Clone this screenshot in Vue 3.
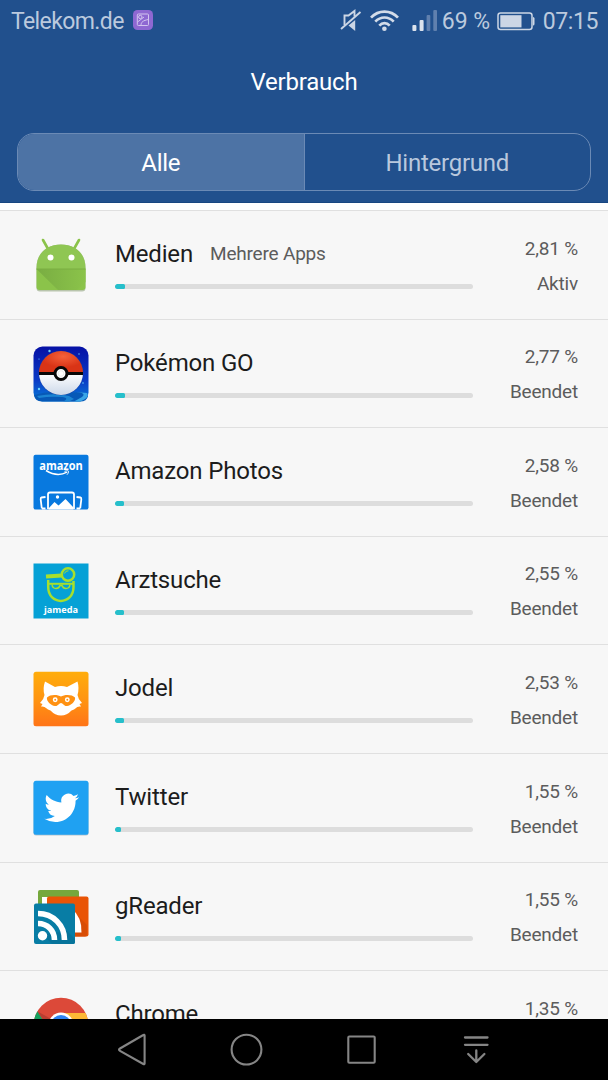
<template>
    <div class="screen">
        <header class="header">
            <div class="status-bar">
                <span class="carrier">Telekom.de</span>
                <svg class="notification" width="20" height="20" viewBox="0 0 20 20">
                    <rect width="20" height="20" rx="4.5" fill="#8e68d2" />
                    <g fill="none" stroke="#d2c4ef" stroke-width="1">
                        <rect x="4.3" y="4" width="11.2" height="11.5" rx="1" />
                        <circle cx="7.3" cy="7" r="1.7" />
                        <path d="M8 15.5C8 12 10 10.500 15.500 9.500M4.500 12L11 7" />
                    </g>
                </svg>
                <svg class="status-icons" width="102" height="24" viewBox="336 8 102 24">
                    <g fill="none" stroke="#ccd6e5" stroke-width="1.900">
                        <path d="M340 29L359.500 12" />
                        <path d="M343.500 25V15.500H347.500L353.500 11V16.500" />
                    </g>
                    <path d="M347.500 25.500L354.200 20V31Z" fill="#ccd6e5" />
                    <g fill="none" stroke="#d3dce9" stroke-width="2.700">
                        <path d="M370 17.700C377.500 9.700 389.500 9.700 397 17.700" />
                        <path d="M374.300 21.700C379.500 16.100 387.500 16.100 392.700 21.700" />
                        <path d="M378.300 25.600C381.300 22.300 385.700 22.300 388.700 25.600" />
                    </g>
                    <circle cx="383.400" cy="28.800" r="2.300" fill="#d3dce9" />
                    <rect x="411.400" y="25" width="4" height="6" rx="1" fill="#dce3ed" />
                    <rect x="418.600" y="20" width="4" height="11" rx="1" fill="#dce3ed" />
                    <rect x="425.600" y="15" width="3.700" height="16" rx="1" fill="#6080ae" />
                    <rect x="432.300" y="10" width="3.700" height="21" rx="1" fill="#6080ae" />
                </svg>
                <span class="battery-level">69 %</span>
                <svg class="battery" width="38" height="19" viewBox="0 0 38 19">
                    <rect x="1" y="1" width="34" height="16.500" rx="2.500" fill="none" stroke="#ccd6e5" stroke-width="1.500" />
                    <path d="M36 5Q37.500 5 37.500 6.500V12Q37.500 13.500 36 13.500Z" fill="#ccd6e5" />
                    <rect x="3.300" y="3.200" width="21.200" height="12.200" fill="#ccd6e5" />
                </svg>
                <span class="clock">07:15</span>
            </div>
            <h1 class="title">Verbrauch</h1>
            <div class="tabs">
                <button
                    v-for="tab in tabs"
                    :key="tab"
                    class="tab"
                    :class="{ active: tab === activeTab }"
                    @click="activeTab = tab"
                >{{ tab }}</button>
            </div>
        </header>

        <main class="list">
            <div v-for="app in apps" :key="app.id" class="row">
                <svg class="app-icon" width="56" height="56" viewBox="0 0 56 56">
                    <g v-if="app.id === 'android'">
                        <defs>
                            <linearGradient id="fold">
                                <stop offset="0" stop-color="#79ad42" />
                                <stop offset="1" stop-color="#8bc34a" />
                            </linearGradient>
                        </defs>
                        <path d="M3.500 32C3 17 13 7.500 28 7.500S53 17 52.500 32V51Q52.500 54.500 49 54.500H7Q3.500 54.500 3.500 51Z" fill="#b9c5ad" />
                        <path d="M10 3L14.500 11M46 3L41.500 11" stroke="#8bc34a" stroke-width="2.600" stroke-linecap="round" />
                        <path d="M3.500 32C3 17 13 7.500 28 7.500S53 17 52.500 32Z" fill="#8fc653" />
                        <path d="M3.500 32H52.500V50Q52.500 53 49.500 53H6.500Q3.500 53 3.500 50Z" fill="#8bc34a" />
                        <path d="M3.500 32H52.500V45L44 53H25Z" fill="url(#fold)" />
                        <path d="M3.500 32H52.500" stroke="#7bae43" stroke-width="1" />
                        <circle cx="17.500" cy="20.500" r="3" fill="#fff" />
                        <circle cx="38.500" cy="20.500" r="3" fill="#fff" />
                    </g>
                    <g v-else-if="app.id === 'pokemon'">
                        <defs>
                            <linearGradient id="night" x2="0" y2="1">
                                <stop offset="0" stop-color="#0611a5" />
                                <stop offset=".6" stop-color="#0a39c5" />
                                <stop offset="1" stop-color="#087bd8" />
                            </linearGradient>
                            <radialGradient id="ball" cx=".55" cy=".25">
                                <stop offset="0" stop-color="#f5613a" />
                                <stop offset="1" stop-color="#d93416" />
                            </radialGradient>
                            <linearGradient id="ball-bottom" x2="0" y2="1">
                                <stop offset="0" stop-color="#fff" />
                                <stop offset="1" stop-color="#ccd8e9" />
                            </linearGradient>
                        </defs>
                        <rect x=".5" y=".5" width="55" height="55" rx="9" fill="url(#night)" />
                        <path d="M1 49Q17 44 32 47L49 46L55 50Q54 55.500 47 55.500H9Q2 55.500 1 49Z" fill="#0759b7" />
                        <path d="M4 50Q22 46.500 36 50L41 53L36 55.500H30Q37 52 29 51Q17 50 6 52Z" fill="#1c84d3" />
                        <path d="M43 46Q54 47 49 51L41 55.500H47Q57 52 54 47Z" fill="#3aa6e6" />
                        <circle cx="28" cy="27" r="22.300" fill="#163c9d" />
                        <path d="M6 27A22 22 0 0 1 50 27Z" fill="url(#ball)" />
                        <path d="M6 27A22 22 0 0 0 50 27Z" fill="url(#ball-bottom)" />
                        <path d="M6 27.500H50" stroke="#080808" stroke-width="3" />
                        <circle cx="28" cy="27.500" r="6" fill="#fff" stroke="#080808" stroke-width="3" />
                        <circle cx="28" cy="27.500" r="2.800" fill="#fff" stroke="#ddd" stroke-width=".6" />
                        <g fill="#69cef8">
                            <circle cx="16.500" cy="5" r="1.200" />
                            <circle cx="6" cy="43" r="1.200" />
                            <circle cx="46" cy="8" r=".7" />
                            <circle cx="50" cy="37" r=".8" />
                            <circle cx="6" cy="13" r=".6" />
                        </g>
                    </g>
                    <g v-else-if="app.id === 'amazon'">
                        <rect x=".5" y=".8" width="55" height="54.800" rx="2" fill="#0879df" />
                        <text x="28" y="15.500" text-anchor="middle" textLength="43.500" lengthAdjust="spacingAndGlyphs" font-family="'Open Sans', sans-serif" font-weight="700" font-size="13" fill="#fff">amazon</text>
                        <path d="M13 16.500Q24 23.500 34 18.200" fill="none" stroke="#fff" stroke-width="1.500" />
                        <path d="M31.500 17.300Q36 16 35.500 17.800Q35.200 19.500 34 20.700" fill="none" stroke="#fff" stroke-width="1" />
                        <g fill="none" stroke="#fff" stroke-width="1.800">
                            <path d="M15 55V40.500Q15 38.500 17 38.500H39Q41 38.500 41 40.500V55" />
                            <path d="M12.500 43L8.500 43.500Q7.500 43.700 7.700 45.500L8.800 54.500M12.500 54.500H9M43.500 43L47.500 43.500Q48.500 43.700 48.300 45.500L47.200 54.500M43.500 54.500H47" />
                        </g>
                        <circle cx="24.500" cy="43" r="1.700" fill="#fff" />
                        <path d="M15.500 54.500L21.500 48L25.500 51.500L32.500 45L40.500 53.500V55.500H15.500Z" fill="#fff" />
                    </g>
                    <g v-else-if="app.id === 'jameda'">
                        <rect x=".5" y=".5" width="55" height="55" fill="#05a1d6" />
                        <g fill="none" stroke="#a7df2d" stroke-width="2.500">
                            <circle cx="35" cy="11.500" r="6.200" />
                            <path d="M31.500 10.500Q32.500 7.500 35.500 7.800" stroke-width="1" />
                            <path d="M13 13.500L29 12.500" stroke-width="4" />
                            <path d="M15.200 17V24C15.200 42.500 40.500 42.500 40.500 24V18" />
                            <path d="M15 20.800H41" stroke-width="2" />
                            <path d="M19 21.500Q19.500 25.500 23 25.500Q26 25.500 27 22.500H29Q30 25.500 33 25.500Q36.500 25.500 37 21.500" stroke-width="1.500" />
                        </g>
                        <text x="28" y="50" text-anchor="middle" textLength="34" lengthAdjust="spacingAndGlyphs" font-family="'Open Sans', sans-serif" font-weight="700" font-size="9.500" fill="#fff">jameda</text>
                    </g>
                    <g v-else-if="app.id === 'jodel'">
                        <defs>
                            <linearGradient id="orange" x2="0" y2="1">
                                <stop offset="0" stop-color="#ffad0b" />
                                <stop offset=".5" stop-color="#ff9511" />
                                <stop offset="1" stop-color="#ff7418" />
                            </linearGradient>
                        </defs>
                        <rect x=".5" y=".7" width="55" height="54.500" rx="2.500" fill="url(#orange)" />
                        <path d="M12 10.500L22 16Q28 14 34 16L44.500 10.500Q46.500 17.500 44.500 24Q45 28 49 32L46.500 33L48 35.500Q44 35 43 37L41 38.500L38.500 39.500Q34 44.500 28 44.500Q22 44.500 17.500 39.500L15 38.500L13 37Q11.500 35 8 35.500L9.500 33L7 32Q11 28 11.500 24Q9.500 17.500 12 10.500Z" fill="#fff" />
                        <path d="M14 26.500C17 23 25 23.500 28 25.500C31 23.500 39 23 42 26.500C43 30 38 34.500 34 35C31 35.500 30 32 28 32C26 32 25 35.500 22 35C18 34.500 13 30 14 26.500Z" fill="#ff9112" />
                        <g fill="#ff9112" stroke="#fff" stroke-width="1.500">
                            <circle cx="22.200" cy="28.700" r="1.700" />
                            <circle cx="34.300" cy="28.700" r="1.700" />
                        </g>
                    </g>
                    <g v-else-if="app.id === 'twitter'">
                        <rect x=".5" y="1.500" width="55" height="54" rx="2.500" fill="#b8c5ce" />
                        <rect x=".5" y=".8" width="55" height="54" rx="2.500" fill="#1fa1f2" />
                        <path transform="translate(11.300 10.500) scale(1.450)" d="M23.950 4.570a10 10 0 0 1-2.820.770 4.960 4.960 0 0 0 2.160-2.720c-.950.550-2 .950-3.130 1.180a4.920 4.920 0 0 0-8.380 4.480C7.690 8.090 4.070 6.130 1.640 3.160a4.820 4.820 0 0 0-.670 2.480c0 1.710.870 3.210 2.190 4.100a4.900 4.900 0 0 1-2.230-.620v.060a4.920 4.920 0 0 0 3.950 4.830 5 5 0 0 1-2.210.080 4.940 4.940 0 0 0 4.600 3.420A9.870 9.870 0 0 1 0 19.540a14 14 0 0 0 7.550 2.210c9.050 0 14-7.500 14-13.980 0-.210 0-.420-.020-.630a9.940 9.940 0 0 0 2.460-2.550z" fill="#fff" />
                    </g>
                    <g v-else-if="app.id === 'greader'">
                        <rect x="5" y="1" width="41" height="40" rx="2" fill="#75a83c" />
                        <path d="M9 8H16V15H9Z" fill="#fff" />
                        <rect x="14" y="7.500" width="41.500" height="40" rx="2" fill="#e95405" />
                        <path d="M40 22L54 36V45.500Q54 47.500 52 47.500H40Z" fill="#d84d06" />
                        <path d="M39 20Q49 28 48.500 43.500H39Z" fill="#fff" />
                        <rect x="1" y="14.500" width="41" height="40.500" rx="2" fill="#087da5" />
                        <path d="M14 50L19 55H40Q42 55 42 53V50L34 42L14 45Z" fill="#07749b" />
                        <g fill="none" stroke="#fff" stroke-width="5.600">
                            <path d="M5 34.500C14.500 34.500 21.500 41.500 21.500 51" />
                            <path d="M5 24.500C20 24.500 31.500 36 31.500 51" />
                        </g>
                        <circle cx="9.500" cy="46.700" r="4.700" fill="#fff" />
                    </g>
                    <g v-else>
                        <circle cx="28" cy="28" r="27.300" fill="#dc4939" />
                        <path d="M4.400 14.300A27.300 27.300 0 0 0 28 55.300L39 34H17Z" fill="#17a05e" />
                        <path d="M28 16H52.500A27.300 27.300 0 0 1 28 55.300L39 34Z" fill="#fdb936" />
                        <path d="M4.400 14.300L16 32L18 22Z" fill="#b93e32" />
                        <circle cx="28" cy="28" r="12.400" fill="#fff" />
                        <circle cx="28" cy="28" r="10" fill="#2f83f0" />
                    </g>
                </svg>
                <div class="details">
                    <div class="names">
                        <span class="name">{{ app.name }}</span>
                        <span v-if="app.note" class="note">{{ app.note }}</span>
                    </div>
                    <div class="bar">
                        <div class="bar-fill" :style="{ width: app.percent + '%' }"></div>
                    </div>
                </div>
                <div class="usage">
                    <span>{{ formatPercent(app.percent) }}</span>
                    <span>{{ app.state }}</span>
                </div>
            </div>
        </main>

        <nav class="nav-bar">
            <svg width="608" height="60" viewBox="0 1020 608 60" fill="none" stroke="#858585" stroke-width="2.100" stroke-linejoin="round">
                <path d="M144.600 1035.500V1063.500Q144.600 1064.800 143.300 1064L120 1050.800Q118 1049.700 120 1048.500L143.300 1035Q144.600 1034.200 144.600 1035.500Z" />
                <circle cx="246.500" cy="1049.600" r="14.900" />
                <rect x="348.300" y="1036.500" width="26.400" height="26.300" rx="1" />
                <path d="M465 1037.500H487.500M465 1044.800H487.500M476.300 1050.500V1062M468.200 1054L476.300 1062L484.400 1054" stroke-width="2.300" stroke-linecap="round" />
            </svg>
        </nav>
    </div>
</template>

<script setup>
import { ref } from 'vue';

const tabs = ['Alle', 'Hintergrund'];
const activeTab = ref('Alle');

const apps = ref([
    { id: 'android', name: 'Medien', note: 'Mehrere Apps', percent: 2.81, state: 'Aktiv' },
    { id: 'pokemon', name: 'Pokémon GO', percent: 2.77, state: 'Beendet' },
    { id: 'amazon', name: 'Amazon Photos', percent: 2.58, state: 'Beendet' },
    { id: 'jameda', name: 'Arztsuche', percent: 2.55, state: 'Beendet' },
    { id: 'jodel', name: 'Jodel', percent: 2.53, state: 'Beendet' },
    { id: 'twitter', name: 'Twitter', percent: 1.55, state: 'Beendet' },
    { id: 'greader', name: 'gReader', percent: 1.55, state: 'Beendet' },
    { id: 'chrome', name: 'Chrome', percent: 1.35, state: 'Beendet' },
]);

const formatPercent = (value) => value.toFixed(2).replace('.', ',') + ' %';
</script>

<style>
body {
    margin: 0;
    overflow: hidden;
}
</style>

<style scoped>
.screen {
    display: flex;
    flex-direction: column;
    width: 608px;
    height: 1080px;
    overflow: hidden;
    background: #f7f7f7;
    font-family: Roboto, "Liberation Sans", sans-serif;
}

.header {
    flex: none;
    box-sizing: border-box;
    height: 203px;
    background: #21508d;
    border-bottom: 1px solid #174681;
}

.status-bar {
    display: flex;
    align-items: center;
    box-sizing: border-box;
    height: 42px;
    padding: 0 10px 0 11px;
    color: #bccade;
    font-size: 23px;
    white-space: nowrap;
}

.carrier {
    letter-spacing: -0.6px;
}

.clock {
    letter-spacing: -0.4px;
}

.notification {
    margin: 0 auto 2px 9px;
}

.status-icons {
    margin: 0 3px 2px 0;
}

.battery {
    margin: 0 7.5px 0 7px;
}

.title {
    margin: 26px 0 0;
    color: #fff;
    font-size: 24px;
    font-weight: 400;
    letter-spacing: -0.2px;
    line-height: 28px;
    text-align: center;
}

.tabs {
    display: flex;
    box-sizing: border-box;
    height: 58px;
    margin: 37px 17px 0;
    overflow: hidden;
    border: 1px solid #6b8ab5;
    border-radius: 17px;
}

.tab {
    flex: 1;
    padding: 2px 0 0;
    border: none;
    background: none;
    color: #b9c8dd;
    font-family: inherit;
    font-size: 24px;
    letter-spacing: -0.25px;
}

.tab + .tab {
    border-left: 1px solid #6b8ab5;
}

.tab.active {
    background: #4d73a5;
    color: #fff;
}

.list {
    flex: 1;
    min-height: 0;
    overflow: hidden;
    padding-top: 7px;
    background: linear-gradient(#fff 7px, #f7f7f7 7px);
}

.row {
    display: flex;
    box-sizing: border-box;
    height: 108.6px;
    padding: 0 30px 0 33px;
    border-top: 1px solid #e0e0e0;
}

.app-icon {
    flex: none;
    margin-top: 26px;
}

.details {
    width: 358px;
    margin: 29px 0 0 26px;
}

.names {
    display: flex;
    gap: 17px;
    line-height: 28px;
    white-space: nowrap;
}

.name {
    color: #1c1c1c;
    font-size: 24px;
    letter-spacing: -0.17px;
}

.note {
    color: #5c5c5c;
    font-size: 19px;
    letter-spacing: -0.2px;
}

.bar {
    height: 5px;
    margin-top: 16px;
    overflow: hidden;
    border-radius: 2.5px;
    background: #ddd;
}

.bar-fill {
    height: 100%;
    border-radius: 1.5px;
    background: #26bfcb;
}

.usage {
    display: flex;
    flex: 1;
    flex-direction: column;
    gap: 11px;
    margin-top: 25.6px;
    color: #5c5c5c;
    font-size: 19px;
    letter-spacing: -0.2px;
    line-height: 24px;
    text-align: right;
}

.nav-bar {
    flex: none;
    height: 61px;
    background: #000;
}

.nav-bar svg {
    display: block;
    margin-top: 1px;
}
</style>
